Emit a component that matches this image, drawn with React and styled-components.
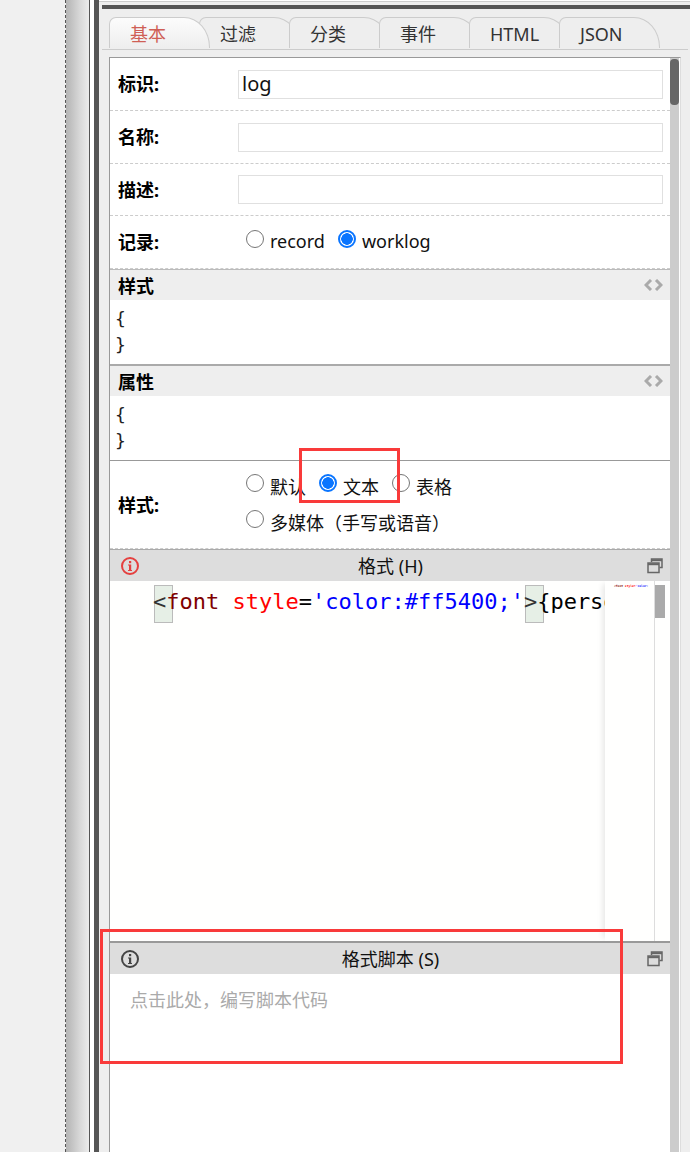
import React from 'react';
import styled, { createGlobalStyle } from 'styled-components';

const GlobalStyle = createGlobalStyle`
  html, body {
    margin: 0;
    padding: 0;
    width: 690px;
    height: 1152px;
    overflow: hidden;
    background: #f0f0f0;
  }
  * { box-sizing: border-box; }
`;

const uiFont = `"Noto Sans", "Noto Sans CJK SC", sans-serif`;
const monoFont = `"DejaVu Sans Mono", "Liberation Mono", monospace`;

const Page = styled.div`
  position: relative;
  display: flex;
  width: 690px;
  height: 1152px;
  overflow: hidden;
  font-family: ${uiFont};
  color: #000;
`;

const Blank = styled.div`
  width: 66px;
  flex: none;
  background: #f0f0f0;
  border-right: 1px dashed #555;
`;

const Shade = styled.div`
  width: 24px;
  flex: none;
  background: linear-gradient(90deg, #b4b4b4, #d8d8d8 60%, #ececec);
  border-right: 1px solid #555;
`;

const Gutter = styled.div`
  width: 4px;
  flex: none;
  background: #fff;
`;

const Splitter = styled.div`
  width: 5px;
  flex: none;
  background: #555;
`;

const Panel = styled.div`
  flex: 1;
  min-width: 0;
  display: flex;
  flex-direction: column;
  background: #eee;
`;

const TopStrip = styled.div`
  height: 5px;
  flex: none;
  background: linear-gradient(#fff 1px, #ccc 1px, #ccc 2px, #eee 2px);
`;

const DarkBar = styled.div`
  height: 4px;
  flex: none;
  margin-left: 3px;
  background: #555;
`;

const TabBar = styled.div`
  display: flex;
  flex: none;
  height: 33px;
  margin: 8px 2px 0 3px;
  padding-left: 7px;
  border-bottom: 1px solid #ccc;
`;

const Tab = styled.div`
  position: relative;
  z-index: ${(p) => (p.$active ? 1 : 0)};
  width: 101px;
  height: 31px;
  margin-left: ${(p) => (p.$first ? 0 : -11)}px;
  padding-left: 20px;
  font-size: 18px;
  line-height: 32px;
  border: 1px solid #ccc;
  border-bottom: 0;
  border-radius: 7px 26px 0 0 / 7px 30px 0 0;
  color: ${(p) => (p.$active ? '#cf5f56' : '#333')};
  background: ${(p) => (p.$active ? 'linear-gradient(#fcfcfc, #eee)' : '#eee')};
`;

const Box = styled.div`
  flex: 1;
  min-height: 0;
  display: flex;
  margin: 7px 9px 0 10px;
  background: #fff;
  border: 1px solid #999;
  border-right-color: #ddd;
  border-bottom: 0;
`;

const Content = styled.div`
  flex: 1;
  min-width: 0;
  display: flex;
  flex-direction: column;
`;

const Scrollbar = styled.div`
  width: 9px;
  flex: none;
  margin-right: 1px;
  background: #ccc;
`;

const ScrollThumb = styled.div`
  height: 46px;
  margin-top: 1px;
  border-radius: 4px;
  background: #666;
`;

const FieldRow = styled.div`
  display: grid;
  grid-template-columns: 120px 1fr;
  align-items: center;
  height: ${(p) => p.$height}px;
  padding: 0 7px 0 8px;
  border-bottom: 1px dashed #ccc;
  border-top: ${(p) => (p.$line ? '1px solid #999' : '0')};
  flex: none;
`;

const Label = styled.div`
  padding-bottom: 2px;
  font-size: 18px;
  font-weight: 700;
`;

const TextInput = styled.div`
  height: 29px;
  padding-left: 3px;
  font-size: 20px;
  line-height: 25px;
  color: #111;
  border: 1px solid #e0e0e0;
`;

const RadioGroup = styled.div`
  display: flex;
  flex-direction: column;
  padding-left: 8px;
`;

const RadioLine = styled.div`
  display: flex;
  align-items: center;
  gap: 13px;
  height: 36px;
`;

const RadioOption = styled.label`
  display: flex;
  align-items: center;
  gap: 6px;
  padding-bottom: 2px;
  font-size: 18px;
  color: #111;
`;

const RadioMark = styled.input.attrs({ type: 'radio', readOnly: true })`
  appearance: none;
  width: 18px;
  height: 18px;
  margin: -5px 0 0;
  flex: none;
  border-radius: 50%;
  border: ${(p) => (p.checked ? '2px solid #0a75ff' : '1.5px solid #767676')};
  background: ${(p) =>
    p.checked ? 'radial-gradient(circle, #0a75ff 0 5.5px, #fff 6px)' : '#fff'};
`;

const SectionHead = styled.div`
  display: flex;
  align-items: center;
  justify-content: space-between;
  flex: none;
  height: ${(p) => (p.$thick ? 32 : 31)}px;
  padding: 0 7px 0 8px;
  font-size: 18px;
  font-weight: 700;
  background: #eee;
  border-top: ${(p) => (p.$thick ? '2px solid #aaa' : '1px solid #bbb')};
`;

const CodeIcon = styled.svg`
  display: block;
  width: 19px;
  height: 12px;
`;

const CodeBlock = styled.div`
  flex: none;
  height: 64px;
  padding: 6px 0 0 5px;
  font-family: ${monoFont};
  font-size: 18px;
  line-height: 26px;
  color: #222;
`;

const EditorHead = styled.div`
  display: grid;
  grid-template-columns: 36px 1fr 36px;
  align-items: center;
  flex: none;
  height: ${(p) => (p.$thick ? 33 : 32)}px;
  padding: 0 7px 0 11px;
  font-size: 18px;
  text-align: center;
  background: #ddd;
  border-top: ${(p) => (p.$thick ? '2px solid #999' : '1px solid #aaa')};
`;

const EditorTitle = styled.div`
  margin-right: 3px;
  padding-bottom: 2px;
  color: #111;
`;

const HeadIcon = styled.svg`
  display: block;
  width: ${(p) => p.$size}px;
  height: ${(p) => p.$size}px;
  justify-self: ${(p) => p.$align};
`;

const Editor = styled.div`
  position: relative;
  flex: none;
  height: 360px;
  padding: 6px 0 0 43px;
  overflow: hidden;
  white-space: pre;
  font-family: ${monoFont};
  font-size: 22px;
  line-height: 30px;
  background: #fffffe;
`;

const Bracket = styled.span`
  display: inline-block;
  width: 13.25px;
  color: #333;
  position: relative;
  &::before {
    content: '';
    position: absolute;
    z-index: 0;
    left: 1px;
    top: -2px;
    width: 17px;
    height: 36px;
    background: #e6efe6;
    border: 1px solid #bbb;
  }
  span {
    position: relative;
    z-index: 1;
  }
`;

const Token = styled.span`
  position: relative;
  z-index: 1;
  color: ${(p) => p.$color};
`;

const Minimap = styled.div`
  position: absolute;
  z-index: 2;
  top: 0;
  right: 5px;
  bottom: 0;
  width: 60px;
  padding: 3px 0 0 9px;
  background: #fffffe;
  box-shadow: -5px 0 6px -3px rgba(0, 0, 0, 0.1);
  font-size: 3px;
  line-height: 4px;
  font-weight: 700;
`;

const MiniTrack = styled.div`
  position: absolute;
  top: 0;
  right: 0;
  bottom: 0;
  width: 11px;
  border-left: 1px solid #ddd;
`;

const MiniThumb = styled.div`
  height: 33px;
  margin-top: 4px;
  background: #aaa;
`;

const ScriptArea = styled.div`
  flex: 1;
  padding: 13px 0 0 20px;
  font-size: 18px;
  line-height: 26px;
  color: #aaa;
`;

const Callout = styled.div`
  position: absolute;
  z-index: 3;
  left: ${(p) => p.$x}px;
  top: ${(p) => p.$y}px;
  width: ${(p) => p.$w}px;
  height: ${(p) => p.$h}px;
  border: 3px solid #f93a3a;
`;

const InfoIcon = ({ color }) => (
  <HeadIcon viewBox="0 0 18 18" $size={18} $align="start">
    <circle cx="9" cy="9" r="8" fill="none" stroke={color} strokeWidth="2" />
    <rect x="8" y="4" width="2.2" height="2.2" fill={color} />
    <path d="M7 7.5h3.2V13H11v1H7v-1h1V8.5H7z" fill={color} />
  </HeadIcon>
);

const RestoreIcon = () => (
  <HeadIcon viewBox="0 0 16 16" $size={16} $align="end">
    <path d="M4.5 4V1h10.5v8.5H12.5" fill="none" stroke="#666" strokeWidth="1.5" />
    <path d="M4.5 2.2H15" stroke="#666" strokeWidth="2" />
    <rect x="1" y="5" width="11" height="9.5" fill="none" stroke="#666" strokeWidth="1.5" />
    <path d="M1 6.2h11" stroke="#666" strokeWidth="2" />
  </HeadIcon>
);

const Chevrons = () => (
  <CodeIcon viewBox="0 0 19 12">
    <path
      d="M7 1L2 6l5 5M12 1l5 5-5 5"
      fill="none"
      stroke="#aaa"
      strokeWidth="3"
    />
  </CodeIcon>
);

const Radio = ({ label, checked }) => (
  <RadioOption>
    <RadioMark checked={!!checked} />
    {label}
  </RadioOption>
);

const tabs = ['基本', '过滤', '分类', '事件', 'HTML', 'JSON'];

const App = () => {
  return (
    <Page>
      <GlobalStyle />
      <Blank />
      <Shade />
      <Gutter />
      <Splitter />
      <Panel>
        <TopStrip />
        <DarkBar />
        <TabBar>
          {tabs.map((name, index) => (
            <Tab key={name} $first={index === 0} $active={index === 0}>
              {name}
            </Tab>
          ))}
        </TabBar>
        <Box>
          <Content>
            <FieldRow $height={53}>
              <Label>标识:</Label>
              <TextInput>log</TextInput>
            </FieldRow>
            <FieldRow $height={53}>
              <Label>名称:</Label>
              <TextInput />
            </FieldRow>
            <FieldRow $height={52}>
              <Label>描述:</Label>
              <TextInput />
            </FieldRow>
            <FieldRow $height={53}>
              <Label>记录:</Label>
              <RadioGroup>
                <RadioLine>
                  <Radio label="record" />
                  <Radio label="worklog" checked />
                </RadioLine>
              </RadioGroup>
            </FieldRow>

            <SectionHead>
              样式
              <Chevrons />
            </SectionHead>
            <CodeBlock>
              {'{'}
              <br />
              {'}'}
            </CodeBlock>
            <SectionHead $thick>
              属性
              <Chevrons />
            </SectionHead>
            <CodeBlock>
              {'{'}
              <br />
              {'}'}
            </CodeBlock>

            <FieldRow $height={89} $line>
              <Label>样式:</Label>
              <RadioGroup>
                <RadioLine>
                  <Radio label="默认" />
                  <Radio label="文本" checked />
                  <Radio label="表格" />
                </RadioLine>
                <RadioLine>
                  <Radio label="多媒体（手写或语音）" />
                </RadioLine>
              </RadioGroup>
            </FieldRow>

            <EditorHead>
              <InfoIcon color="#e5403f" />
              <EditorTitle>格式 (H)</EditorTitle>
              <RestoreIcon />
            </EditorHead>
            <Editor>
              <Bracket><span>&lt;</span></Bracket>
              <Token $color="#800000">font</Token>
              <Token $color="#000"> </Token>
              <Token $color="#f00">style</Token>
              <Token $color="#000">=</Token>
              <Token $color="#00f">'color:#ff5400;'</Token>
              <Bracket><span>&gt;</span></Bracket>
              <Token $color="#000">{'{person}'}</Token>
              <Minimap>
                <Token $color="#800000">&lt;font </Token>
                <Token $color="#f00">style=</Token>
                <Token $color="#00f">'color:</Token>
                <MiniTrack>
                  <MiniThumb />
                </MiniTrack>
              </Minimap>
            </Editor>

            <EditorHead $thick>
              <InfoIcon color="#444" />
              <EditorTitle>格式脚本 (S)</EditorTitle>
              <RestoreIcon />
            </EditorHead>
            <ScriptArea>点击此处，编写脚本代码</ScriptArea>
          </Content>
          <Scrollbar>
            <ScrollThumb />
          </Scrollbar>
        </Box>
      </Panel>
      <Callout $x={299} $y={448} $w={101} $h={55} />
      <Callout $x={100} $y={929} $w={523} $h={135} />
    </Page>
  );
};

export default App;
